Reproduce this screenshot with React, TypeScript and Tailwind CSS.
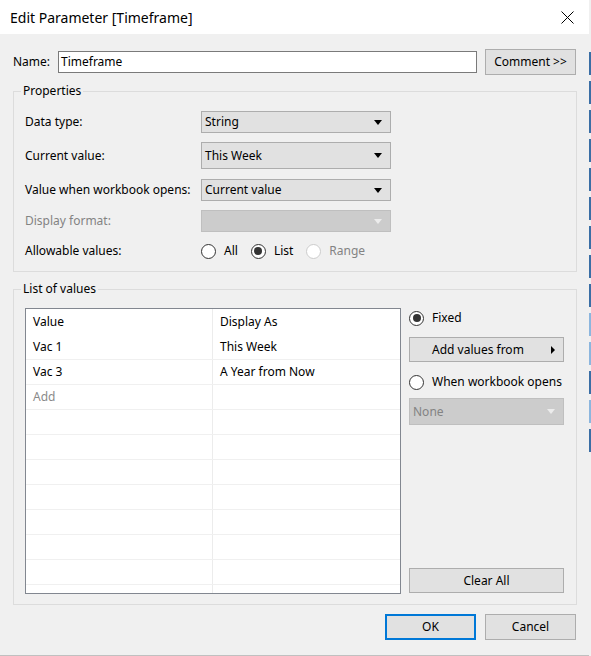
import React from 'react';

const font = { fontFamily: '"Noto Sans", "Open Sans", sans-serif' };

const SelectBox = ({ value, disabled, h = 'h-[22px]' }: { value?: string; disabled?: boolean; h?: string }) => (
  <div
    className={`flex items-center justify-between w-[190px] ${h} border pl-[3px] pr-[8px] ${
      disabled ? 'bg-[#cccccc] border-[#bfbfbf] text-[#838383]' : 'bg-[#e1e1e1] border-[#adadad] text-black'
    }`}
  >
    <span>{value}</span>
    <svg width="8" height="5" viewBox="0 0 8 5">
      <path d="M0 0 L8 0 L4 5 Z" fill={disabled ? '#ececec' : '#000'} />
    </svg>
  </div>
);

const Radio = ({ label, checked, disabled }: { label: string; checked?: boolean; disabled?: boolean }) => (
  <div className={`flex items-center gap-[8px] ${disabled ? 'text-[#838383]' : 'text-black'}`}>
    <span
      className={`flex items-center justify-center w-[15px] h-[15px] rounded-full border bg-white ${
        disabled ? 'border-[#cccccc]' : 'border-[#333333]'
      }`}
    >
      {checked && <span className="w-[8px] h-[8px] rounded-full bg-[#333333]" />}
    </span>
    <span>{label}</span>
  </div>
);

const PropRow = ({ label, children, disabled }: { label: string; children: React.ReactNode; disabled?: boolean }) => (
  <div className="flex items-center">
    <span className={`w-[176px] ${disabled ? 'text-[#838383]' : 'text-black'}`}>{label}</span>
    {children}
  </div>
);

const rows: [string, string, boolean?][] = [
  ['Value', 'Display As'],
  ['Vac 1', 'This Week'],
  ['Vac 3', 'A Year from Now'],
  ['Add', '', true],
  ['', ''],
  ['', ''],
  ['', ''],
  ['', ''],
  ['', ''],
  ['', ''],
  ['', ''],
  ['', ''],
];

const stripe = ['#3a6ea5', '#3a6ea5', '#3a6ea5', '#3a6ea5', '#3a6ea5', '#3a6ea5', '#3a6ea5', '#3a6ea5', '#3a6ea5', '#8cb6de', '#8cb6de', '#3a6ea5', '#8cb6de', '#3a6ea5'];

export default function App() {
  return (
    <div className="flex w-[591px] h-[656px] text-[12px] bg-[#f0f0f0]" style={font}>
      <div className="w-[589px] h-[656px] flex flex-col border-b border-[#c0c0c0]">
        {/* title bar */}
        <div className="h-[34px] bg-white flex items-center justify-between pl-[10px] pr-[15px]">
          <span className="text-[14px] text-black">Edit Parameter [Timeframe]</span>
          <svg width="13" height="13" viewBox="0 0 13 13">
            <path d="M0.5 0.5 L12.5 12.5 M12.5 0.5 L0.5 12.5" stroke="#000" strokeWidth="1" />
          </svg>
        </div>

        <div className="flex-1 flex flex-col px-[13px]">
          {/* name row */}
          <div className="flex items-center mt-[15px] h-[26px]">
            <span className="w-[45px] text-black">Name:</span>
            <div className="w-[419px] h-[22px] bg-white border border-[#7a7a7a] flex items-center pl-[2px] text-black">
              Timeframe
            </div>
            <button className="ml-[8px] w-[91px] h-[26px] bg-[#e1e1e1] border border-[#adadad] text-black">
              Comment &gt;&gt;
            </button>
          </div>

          {/* properties */}
          <fieldset className="mt-[7px] w-[564px] border border-[#dcdcdc] pb-[9px]">
            <legend className="ml-[7px] px-[2px] leading-[18px] text-black">Properties</legend>
            <div className="flex flex-col mt-[11px] pl-[11px]">
              <PropRow label="Data type:">
                <SelectBox value="String" />
              </PropRow>
              <div className="mt-[9px]">
                <PropRow label="Current value:">
                  <SelectBox value="This Week" h="h-[27px]" />
                </PropRow>
              </div>
              <div className="mt-[10px]">
                <PropRow label="Value when workbook opens:">
                  <SelectBox value="Current value" />
                </PropRow>
              </div>
              <div className="mt-[9px]">
                <PropRow label="Display format:" disabled>
                  <SelectBox disabled />
                </PropRow>
              </div>
              <div className="mt-[10px] h-[20px]">
                <PropRow label="Allowable values:">
                  <div className="flex items-center gap-[13px]">
                    <Radio label="All" />
                    <Radio label="List" checked />
                    <Radio label="Range" disabled />
                  </div>
                </PropRow>
              </div>
            </div>
          </fieldset>

          {/* list of values */}
          <fieldset className="mt-[8px] w-[564px] border border-[#dcdcdc] pb-[10px]">
            <legend className="ml-[7px] px-[2px] leading-[18px] text-black">List of values</legend>
            <div className="flex mt-[10px] pl-[11px]">
              <div className="w-[376px] h-[286px] bg-white border border-[#828790] overflow-hidden">
                {rows.map(([a, b, muted], i) => (
                  <div
                    key={i}
                    className={`flex h-[25px] ${i >= 2 ? 'border-t border-[#f0f0f0]' : ''}`}
                  >
                    <div
                      className={`w-[187px] border-r border-[#ececec] flex items-center pl-[7px] ${
                        muted ? 'text-[#8a8a8a]' : 'text-black'
                      }`}
                    >
                      {a}
                    </div>
                    <div className="flex-1 flex items-center pl-[7px] text-black">{b}</div>
                  </div>
                ))}
              </div>

              <div className="ml-[8px] w-[155px] flex flex-col">
                <div className="h-[20px] flex items-center">
                  <Radio label="Fixed" checked />
                </div>
                <button className="mt-[9px] h-[25px] bg-[#e1e1e1] border border-[#adadad] flex items-center justify-between pl-[22px] pr-[8px] text-black">
                  <span>Add values from</span>
                  <svg width="4" height="8" viewBox="0 0 4 8">
                    <path d="M0 0 L4 4 L0 8 Z" fill="#000" />
                  </svg>
                </button>
                <div className="mt-[10px] h-[20px] flex items-center">
                  <Radio label="When workbook opens" />
                </div>
                <div className="mt-[6px] h-[27px] bg-[#cccccc] border border-[#bfbfbf] flex items-center justify-between pl-[3px] pr-[8px] text-[#838383]">
                  <span>None</span>
                  <svg width="8" height="5" viewBox="0 0 8 5">
                    <path d="M0 0 L8 0 L4 5 Z" fill="#ececec" />
                  </svg>
                </div>
                <button className="mt-auto mb-[1px] h-[25px] bg-[#e1e1e1] border border-[#adadad] text-black">
                  Clear All
                </button>
              </div>
            </div>
          </fieldset>

          {/* footer */}
          <div className="mt-[9px] flex justify-end gap-[9px]">
            <button className="w-[91px] h-[26px] bg-[#e1e1e1] border-2 border-[#0078d7] text-black">OK</button>
            <button className="w-[91px] h-[26px] bg-[#e1e1e1] border border-[#adadad] text-black">Cancel</button>
          </div>
        </div>
      </div>

      {/* window behind the dialog */}
      <div className="w-[2px] flex flex-col gap-[6px] pt-[52px]">
        {stripe.map((c, i) => (
          <div key={i} className="h-[23px]" style={{ backgroundColor: c }} />
        ))}
      </div>
    </div>
  );
}
